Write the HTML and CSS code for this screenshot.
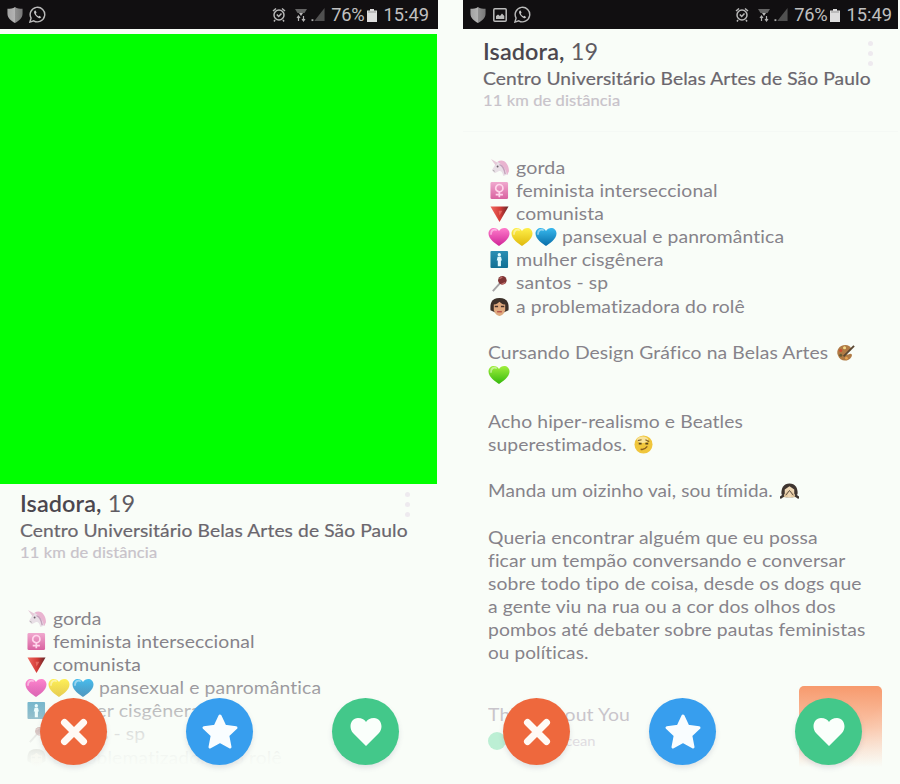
FILE: index.html
```html
<!DOCTYPE html>
<html lang="pt-BR">
<head>
<meta charset="utf-8">
<title>Isadora, 19</title>
<link rel="stylesheet" href="styles.css">
</head>
<body>
<svg class="defs" aria-hidden="true">
  <defs>
    <linearGradient id="gPink" x2="0" y2="1"><stop offset="0" stop-color="#ff7ccb"/><stop offset="1" stop-color="#cf2597"/></linearGradient>
    <linearGradient id="gYellow" x2="0" y2="1"><stop offset="0" stop-color="#fff04a"/><stop offset="1" stop-color="#dfb90c"/></linearGradient>
    <linearGradient id="gBlue" x2="0" y2="1"><stop offset="0" stop-color="#38b9ee"/><stop offset="1" stop-color="#086da8"/></linearGradient>
    <linearGradient id="gGreen" x2="0" y2="1"><stop offset="0" stop-color="#a0ef3c"/><stop offset="1" stop-color="#35b90c"/></linearGradient>
    <linearGradient id="gRed"><stop offset="0" stop-color="#f06a61"/><stop offset=".55" stop-color="#d33a36"/><stop offset="1" stop-color="#61272a"/></linearGradient>
    <linearGradient id="gRose" x2="0" y2="1"><stop offset="0" stop-color="#f0a9cf"/><stop offset="1" stop-color="#d962a0"/></linearGradient>
    <linearGradient id="gTeal" x2="0" y2="1"><stop offset="0" stop-color="#2b8fb4"/><stop offset="1" stop-color="#116f93"/></linearGradient>
    <linearGradient id="gShield"><stop offset="0" stop-color="#a2a2a2"/><stop offset=".5" stop-color="#b4b4b4"/><stop offset=".52" stop-color="#909090"/><stop offset="1" stop-color="#777"/></linearGradient>
  </defs>
  <symbol id="heart" viewBox="0 0 22 20"><path d="M11 19C7.500 16.500 0.500 12 0.500 6.500C0.500 0 8.500-0.800 11 4C13.500-0.800 21.500 0 21.500 6.500C21.500 12 14.500 16.500 11 19Z"/><path d="M3 7C3 3 6 2 8 3" fill="none" stroke="#fff" stroke-opacity=".45" stroke-width="1.800" stroke-linecap="round"/></symbol>
  <symbol id="unicorn" viewBox="0 0 20 20"><path d="M8 4C14 1 20 8 19 17L14 19C13 14 11 13 9 14L5 16L2 13L6 6Z" fill="#e8dfe6"/><path d="M8 4C14 0 20 6 20 14L18 18C17 12 13 7 8 4Z" fill="#e9b4d0"/><path d="M10 7C14 8 15 12 16 17" stroke="#c6a1bd" fill="none" stroke-width="1.500"/><path d="M1 1L8 5L6 8Z" fill="#e5c9d8"/><circle cx="8" cy="9" r="1" fill="#665c67"/><path d="M3 13l2 1" stroke="#aaa"/></symbol>
  <symbol id="female" viewBox="0 0 20 20"><rect x=".500" y="1" width="18.500" height="18" rx="1.500" fill="url(#gRose)"/><circle cx="9.800" cy="7.500" r="3.800" fill="none" stroke="#ffd5eb" stroke-width="1.800"/><path d="M9.800 11.500V17M6 14.300H13.600" stroke="#ffd5eb" stroke-width="1.800"/></symbol>
  <symbol id="triangle" viewBox="0 0 20 20"><path d="M.5 2.500H19.500L10 19Z" fill="url(#gRed)"/><path d="M9 7l4 0-3 5z" fill="#f08a7d" opacity=".6"/></symbol>
  <symbol id="restroom" viewBox="0 0 20 20"><rect x=".500" y="1" width="18.500" height="18" rx="1" fill="url(#gTeal)"/><circle cx="9.800" cy="5" r="1.800" fill="#e1fbff"/><path d="M8 7H11.600L12.500 11H11.500V17H8.200V11H7.100Z" fill="#e1fbff"/></symbol>
  <symbol id="pin" viewBox="0 0 20 20"><path d="M3 18L12 8" stroke="#a5a3a5" stroke-width="2"/><circle cx="13" cy="6.500" r="4.500" fill="#7e3434"/><path d="M10 5l3-2M12 11l4-2" stroke="#bd6c67" stroke-width="1.500"/></symbol>
  <symbol id="girl" viewBox="0 0 20 20"><path d="M.5 14C0 7 1 1 10 1S20 7 19.500 14L15 16H5Z" fill="#3c3029"/><path d="M4 8C7 8 9 6 10 5C12 7 14 8 16 8V14C15 18 12 20 10 20S5 18 4 14Z" fill="#dfaa7f"/><path d="M5 10h3.500m3 0h3.500" stroke="#493229" stroke-width="1.500"/><path d="M7.500 15.500h5" stroke="#b7534b" stroke-width="1.500"/></symbol>
  <symbol id="palette" viewBox="0 0 20 20"><path d="M10 2C3 2 0 8 2 13C4 20 13 20 16 15C18 12 16 10 13 12C10 13 10 10 13 9C18 8 16 2 10 2Z" fill="#b07b45"/><path d="M8 14L19 3" stroke="#5b4733" stroke-width="2"/><circle cx="5" cy="8" r="1.600" fill="#cf4b30"/><circle cx="9" cy="5" r="1.600" fill="#f5dc8a"/><circle cx="5" cy="13" r="1.600" fill="#675c34"/><circle cx="11" cy="16" r="1.400" fill="#e8a451"/></symbol>
  <symbol id="smirk" viewBox="0 0 20 20"><circle cx="10" cy="10" r="9.500" fill="#f0c63c"/><ellipse cx="9" cy="5" rx="6" ry="3.500" fill="#f8e39a"/><path d="M4 6L8 5M12 5L16 7" stroke="#896828" stroke-width="1.300"/><path d="M5 9h3m4 0h3" stroke="#57431e" stroke-width="1.800"/><path d="M7 15Q11 16 14 12" fill="none" stroke="#8a5e1e" stroke-width="1.500"/></symbol>
  <symbol id="shy" viewBox="0 0 20 20"><path d="M1.500 14C1 7 4 2.500 10 2.500S19 7 18.500 14L14 17H6Z" fill="#3f3530"/><path d="M5 9L10 5.500L15 9V15Q10 20 5 15Z" fill="#eed7b4"/><path d="M2 17L9 9L8 17ZM18 17L11 9L12 17Z" fill="#e4c9a0"/><path d="M6 15L10 10L14 15" fill="none" stroke="#524339"/><path d="M0 18L4 15M20 18L16 15" stroke="#3b3430" stroke-width="2.500"/></symbol>
  <symbol id="shield" viewBox="0 0 16 18"><path d="M8 1C10 2.500 13 3 16 3V8C16 13 12 16 8 18C4 16 0 13 0 8V3C3 3 6 2.500 8 1Z" fill="url(#gShield)"/></symbol>
  <symbol id="whats" viewBox="0 0 18 18"><path d="M1 17L2.200 12.800A7.700 7.700 0 1 1 5 15.700Z" fill="none" stroke="#bababa" stroke-width="1.500"/><path d="M6 5C4.500 6.500 6 9 8 11S12 13.500 13 12L11 10.200L10 11C8.500 10.200 7.700 9.200 7.200 8.200L8 7.200L7 4.800Z" fill="#c8c8c8"/></symbol>
  <symbol id="image" viewBox="0 0 14 14"><rect x=".8" y=".8" width="12.400" height="12.400" rx="1" fill="none" stroke="#bcbcbc" stroke-width="1.500"/><path d="M3 11V8L5 6.500L7 8L9 5.500L11.300 8V11Z" fill="#bcbcbc"/></symbol>
  <symbol id="alarm" viewBox="0 0 14 15"><circle cx="7" cy="8" r="5" fill="none" stroke="#b8b8b8" stroke-width="1.500"/><path d="M1 4L4 1.500M13 4L10 1.500M3 13L2 14.500M11 13L12 14.500M4.800 7.500L6.700 9.500L9.500 6.500" fill="none" stroke="#b8b8b8" stroke-width="1.500"/></symbol>
  <symbol id="wifi" viewBox="0 0 12 14"><path d="M0 1H12L9.500 5H2.500Z" fill="#656565"/><path d="M4 5H8L6 8Z" fill="#b8b8b8"/><path d="M3.500 13V8M2 10L3.500 8L5 10M8.500 8V13M7 11L8.500 13L10 11" stroke="#b3b3b3" fill="none" stroke-width="1.200"/></symbol>
  <symbol id="signal" viewBox="0 0 15 15"><path d="M14 0V14H3Z" fill="#505050"/><path d="M0 12h2v2H0z" fill="#aaa"/></symbol>
  <symbol id="battery" viewBox="0 0 10 13"><path d="M3 0H7V1.500H10V13H0V1.500H3Z" fill="#ddd"/><path d="M1 2.500h8v1H1z" fill="#999"/></symbol>
  <symbol id="cross" viewBox="0 0 28 28"><path d="M4.500 4.500L23.500 23.500M23.500 4.500L4.500 23.500" stroke="#fffaf5" stroke-width="7" stroke-linecap="round"/></symbol>
  <symbol id="star" viewBox="0 0 38 38"><path d="M19 3L23.800 13.200L35 14.700L26.800 22.500L29 34L19 28.500L9 34L11.200 22.500L3 14.700L14.200 13.200Z" fill="#f9fdff" stroke="#f9fdff" stroke-width="3" stroke-linejoin="round"/></symbol>
  <symbol id="like" viewBox="0 0 34 32"><path d="M17 30L4 17C-1 11 2 2 9 2C13 2 16 4 17 6C18 4 21 2 25 2C32 2 35 11 30 17Z" fill="#fafffb"/></symbol>
</svg>

<main class="screens">
  <section class="phone phone-photo">
    <header class="status">
      <div class="status-left"><svg class="i-shield"><use href="#shield"/></svg><svg class="i-whats"><use href="#whats"/></svg></div>
      <div class="status-right"><svg class="i-alarm"><use href="#alarm"/></svg><svg class="i-wifi"><use href="#wifi"/></svg><svg class="i-signal"><use href="#signal"/></svg><span class="percent">76%</span><svg class="i-battery"><use href="#battery"/></svg><span class="clock">15:49</span></div>
    </header>
    <div class="photo"></div>
    <div class="profile">
      <div class="title">
        <h1><b>Isadora,</b> 19</h1>
        <p class="school">Centro Universitário Belas Artes de São Paulo</p>
        <p class="distance">11 km de distância</p>
        <div class="more"><i></i><i></i><i></i></div>
      </div>
      <div class="bio">
        <p><svg class="emoji"><use href="#unicorn"/></svg><span>gorda</span></p>
        <p><svg class="emoji"><use href="#female"/></svg><span>feminista interseccional</span></p>
        <p><svg class="emoji"><use href="#triangle"/></svg><span>comunista</span></p>
        <p><svg class="heart" fill="url(#gPink)"><use href="#heart"/></svg><svg class="heart" fill="url(#gYellow)"><use href="#heart"/></svg><svg class="heart" fill="url(#gBlue)"><use href="#heart"/></svg><span class="after-hearts">pansexual e panromântica</span></p>
        <p><svg class="emoji"><use href="#restroom"/></svg><span class="wide">mulher cisgênera</span></p>
        <p><svg class="emoji"><use href="#pin"/></svg><span>santos - sp</span></p>
        <p><svg class="emoji"><use href="#girl"/></svg><span>a problematizadora do rolê</span></p>
      </div>
    </div>
    <div class="fade"></div>
    <nav class="actions"><button class="nope"><svg><use href="#cross"/></svg></button><button class="super"><svg><use href="#star"/></svg></button><button class="yes"><svg><use href="#like"/></svg></button></nav>
  </section>

  <section class="phone phone-bio">
    <header class="status">
      <div class="status-left"><svg class="i-shield"><use href="#shield"/></svg><svg class="i-image"><use href="#image"/></svg><svg class="i-whats"><use href="#whats"/></svg></div>
      <div class="status-right"><svg class="i-alarm"><use href="#alarm"/></svg><svg class="i-wifi"><use href="#wifi"/></svg><svg class="i-signal"><use href="#signal"/></svg><span class="percent">76%</span><svg class="i-battery"><use href="#battery"/></svg><span class="clock">15:49</span></div>
    </header>
    <div class="profile">
      <div class="title">
        <h1><b>Isadora,</b> 19</h1>
        <p class="school">Centro Universitário Belas Artes de São Paulo</p>
        <p class="distance">11 km de distância</p>
        <div class="more"><i></i><i></i><i></i></div>
      </div>
      <div class="bio">
        <p><svg class="emoji"><use href="#unicorn"/></svg><span class="wide">gorda</span></p>
        <p><svg class="emoji"><use href="#female"/></svg><span>feminista interseccional</span></p>
        <p><svg class="emoji"><use href="#triangle"/></svg><span>comunista</span></p>
        <p><svg class="heart" fill="url(#gPink)"><use href="#heart"/></svg><svg class="heart" fill="url(#gYellow)"><use href="#heart"/></svg><svg class="heart" fill="url(#gBlue)"><use href="#heart"/></svg><span class="after-hearts">pansexual e panromântica</span></p>
        <p><svg class="emoji"><use href="#restroom"/></svg><span class="wide">mulher cisgênera</span></p>
        <p><svg class="emoji"><use href="#pin"/></svg><span>santos - sp</span></p>
        <p><svg class="emoji"><use href="#girl"/></svg><span>a problematizadora do rolê</span></p>
        <p class="gap course"><span>Cursando Design Gráfico na Belas Artes</span><svg class="emoji"><use href="#palette"/></svg></p>
        <p><svg class="heart" fill="url(#gGreen)"><use href="#heart"/></svg></p>
        <p class="gap"><span>Acho hiper-realismo e Beatles</span></p>
        <p class="overrated"><span>superestimados.</span><svg class="emoji"><use href="#smirk"/></svg></p>
        <p class="gap hello"><span class="tight">Manda um oizinho vai, sou tímida.</span><svg class="emoji"><use href="#shy"/></svg></p>
        <p class="gap"><span>Queria encontrar alguém que eu possa</span></p>
        <p><span>ficar um tempão conversando e conversar</span></p>
        <p><span>sobre todo tipo de coisa, desde os dogs que</span></p>
        <p><span>a gente viu na rua ou a cor dos olhos dos</span></p>
        <p><span>pombos até debater sobre pautas feministas</span></p>
        <p><span class="tight">ou políticas.</span></p>
      </div>
      <div class="anthem">
        <div><p class="song">Think About You</p><p class="artist"><i></i><span>Frank Ocean</span></p></div>
        <div class="cover"></div>
      </div>
    </div>
    <nav class="actions"><button class="nope"><svg><use href="#cross"/></svg></button><button class="super"><svg><use href="#star"/></svg></button><button class="yes"><svg><use href="#like"/></svg></button></nav>
  </section>
</main>
</body>
</html>
```
FILE: styles.css
```css
* { box-sizing: border-box; }
body { margin: 0; background: #f9fdf8; font-family: Lato, "Liberation Sans", sans-serif; color: #86838a; font-variant-ligatures: none; }
p, h1 { margin: 0; font-weight: 400; white-space: nowrap; }
.defs { position: absolute; width: 0; height: 0; }
.screens { display: flex; gap: 25px; width: 900px; height: 784px; overflow: hidden; }
.phone { position: relative; width: 438px; height: 784px; overflow: hidden; }
.phone-bio { width: 435px; }

.status { height: 29px; background: #110f11; display: flex; justify-content: space-between; align-items: center; padding: 0 9px 0 7px; font-family: Roboto, sans-serif; font-size: 18.300px; color: #c0c0c0; }
.phone-bio .status { padding-right: 6px; }
.status-left, .status-right { display: flex; align-items: center; }
.status-left { gap: 6px; }
.phone-bio .status-left { gap: 7px; }
.i-shield { width: 16px; height: 17px; }
.i-whats { width: 17px; height: 17px; }
.i-image { width: 14px; height: 14px; }
.i-alarm { width: 14px; height: 15px; margin-right: 9px; }
.i-wifi { width: 12px; height: 14px; margin-right: 4px; }
.i-signal { width: 15px; height: 14px; margin-right: 5px; }
.i-battery { width: 10px; height: 13px; margin: 2px 6px 0 3px; }
.percent { letter-spacing: -.2px; }

.photo { width: 437px; height: 450px; margin-top: 5px; background: #0f0; }
.title { position: relative; height: 103px; padding: 6px 0 0 20px; }
.phone-photo .title { height: 123px; }
.phone-bio .title { padding-top: 9px; border-bottom: 1px solid #f5f9f5; }
h1 { font-size: 23px; line-height: 26px; color: #5f5b62; letter-spacing: .1px; transform: scaleX(1.02); transform-origin: 0 50%; }
h1 b { font-weight: 600; color: #4b474e; }
.school { font-size: 17.800px; line-height: 28px; color: #6a666d; letter-spacing: .1px; transform: scaleX(1.08); transform-origin: 0 50%; -webkit-text-stroke: .2px #6a666d; }
.distance { font-size: 15.200px; line-height: 16px; color: #c8c3ca; letter-spacing: .1px; transform: scaleX(1.085); transform-origin: 0 50%; -webkit-text-stroke: .2px #c8c3ca; }
.more { position: absolute; right: 28px; top: 8px; display: flex; flex-direction: column; gap: 5px; }
.phone-bio .more { right: 25px; top: 12px; }
.more i { width: 5px; height: 5px; border-radius: 50%; background: #eeeaef; }

.bio { padding-left: 25px; font-size: 17.800px; line-height: 23.100px; letter-spacing: .1px; }
.phone-bio .bio { padding-top: 24px; }
.bio p { height: 23.100px; display: flex; align-items: center; }
.bio span { transform: scaleX(1.086); transform-origin: 0 50%; }
.bio span.wide { transform: scaleX(1.105); }
.bio span.tight { transform: scaleX(1.067); }
.bio .gap { margin-top: 23.100px; }
.emoji { width: 19px; height: 19px; margin: 0 7px 0 2px; flex: none; }
.course .emoji { margin-left: 35px; }
.overrated .emoji { margin-left: 18px; }
.hello .emoji { margin-left: 25px; }
.heart { width: 22px; height: 20px; margin-right: 1.300px; flex: none; }
.after-hearts { margin-left: 4px; }

.anthem { display: flex; justify-content: space-between; padding: 22px 16px 0 25px; }
.song { font-size: 17.800px; line-height: 23px; margin-top: 17px; color: #c9c5cb; letter-spacing: .1px; transform: scaleX(1.09); transform-origin: 0 50%; }
.artist { display: flex; align-items: center; gap: 8px; height: 29px; font-size: 14px; color: #dfdce1; }
.artist i { width: 18px; height: 18px; border-radius: 50%; background: #bcefd4; }
.artist span { transform: scaleX(1.05); transform-origin: 0 50%; }
.cover { width: 83px; height: 83px; border-radius: 5px; background: linear-gradient(to bottom right, transparent 60%, rgba(249,253,248,.25)), linear-gradient(#f79a6d, #fac5a9 50%, #f9fdf8 98%); }

.fade { position: absolute; inset: 672px 0 0; background: linear-gradient(rgba(249,253,248,0), rgba(249,253,248,.8) 65px, rgba(249,253,248,.94) 82px, #f9fdf8 96px); }
.actions { position: absolute; left: 40px; top: 698px; display: flex; gap: 79px; }
.actions button { width: 67px; height: 67px; padding: 0; border: 0; border-radius: 50%; display: grid; place-items: center; box-shadow: 0 3px 5px rgba(90,90,120,.15); }
.nope { background: #ee683d; }
.super { background: #379eee; }
.yes { background: #43c88a; }
.nope svg { width: 28px; height: 28px; }
.super svg { width: 38px; height: 38px; }
.yes svg { width: 34px; height: 32px; }
```
